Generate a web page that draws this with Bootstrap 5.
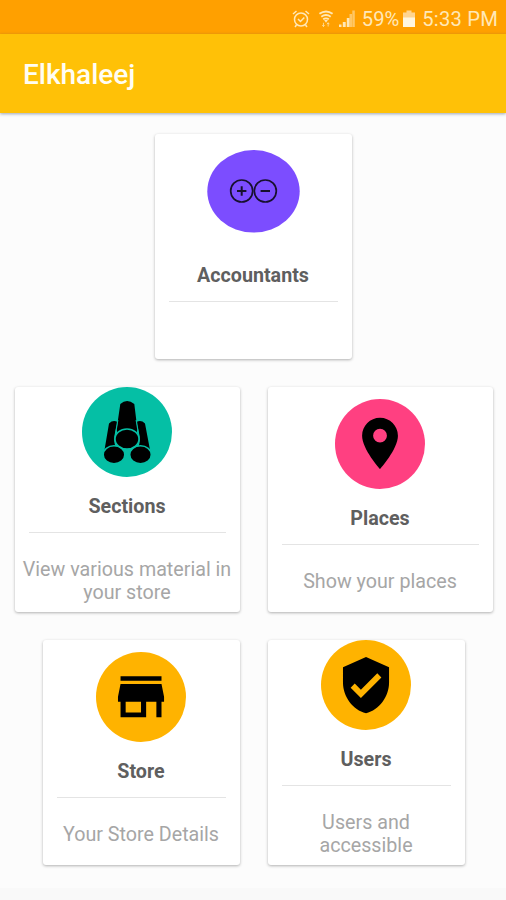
<!DOCTYPE html>
<html lang="en">
<head>
<meta charset="utf-8">
<meta name="viewport" content="width=device-width, initial-scale=1">
<title>Elkhaleej</title>
<link href="https://cdn.jsdelivr.net/npm/bootstrap@5.3.0/dist/css/bootstrap.min.css" rel="stylesheet">
<style>
body { font-family: Roboto, "Liberation Sans", sans-serif; background: #fcfcfc; height: 900px; overflow: hidden; }
.status-bar { height: 34px; background: #ffa000; color: #ffe8b8; font-size: 20.2px; line-height: 24px; padding: 3px 8px 0 0; }
.battery-level { margin-left: 6px; }
.battery-icon { margin-left: 4px; }
.clock-text { margin-left: 7px; letter-spacing: .2px; }
.app-bar { height: 78.5px; background: #ffc107; padding: 4px 0 0 23px; box-shadow: 0 1px 3px rgba(40, 60, 90, .45); }
.app-title { font-size: 28px; font-weight: 500; color: #fffdf3; line-height: 32px; }
.menu-grid { padding-top: 21.5px; gap: 28px; height: 775.5px; }
.menu-pair { gap: 28px; padding-left: 1px; }
.tile { height: 225px; border: 0; border-radius: 3px; box-shadow: 0 1px 3px rgba(0, 0, 0, .3); }
.tile-narrow { width: 197px; }
.tile-wide { width: 225px; }
.tile-drop { padding-top: 12px; }
.tile-first { padding-top: 16px; }
.tile-title { font-size: 19.7px; font-weight: 700; line-height: 24px; color: #5f5f5f; margin: 18px 0 0; }
.tile-first .tile-title { margin-top: 31px; }
.tile > .tile-rule { border-top: 1px solid #e4e4e4; opacity: 1; margin: 13px 14px 24.5px; align-self: stretch; }
.tile-text { font-size: 19.7px; line-height: 23.5px; color: #a6a6a6; margin: 0; padding: 0 6px; }
.tile-narrow .tile-text { padding: 0 28px; }
.tile-narrow.tile-drop .tile-text { padding: 0; }
.bottom-strip { background: #f9f9f9; }
</style>
</head>
<body class="d-flex flex-column">
<header class="status-bar d-flex justify-content-end align-items-center flex-shrink-0">
  <svg width="18" height="20" viewBox="0 0 18 20" fill="none" stroke="#ffe8b8" stroke-width="1.5"><circle cx="9" cy="10.5" r="6.5"/><path d="M6 10l2.500 2.500L12.300 8.500M1 5l3.500-3M17 5l-3.500-3M4.500 16l-1.500 2M13.500 16l1.500 2"/></svg>
  <svg class="ms-2" width="16" height="20" viewBox="0 0 17 20" fill="none" stroke="#ffe8b8" stroke-width="2"><path d="M1.500 4.500Q8.500-.5 15.500 4.500M3.500 7.500q5-3.500 10 0M5.500 10.300q3-2 6 0"/><path d="M6.500 11h4l-2 3z" fill="#ffe8b8" stroke="none"/><path d="M5.800 14v4M4.500 16.500l1.300 1.500 1.200-1.500M10.800 18v-4M9.500 15.500l1.300-1.500 1.200 1.500" stroke-width=".8"/></svg>
  <svg class="ms-1" width="18" height="20" viewBox="0 0 18 20" fill="#ffe8b8"><path d="M1 15.500h2.500V18H1zM4.800 13h2.900v5H4.800zM8.800 9h2.700v9H8.800z"/><path d="M11.500 5h2.500v13h-2.500zM14.300 1.500h2.500V18h-2.500z" opacity=".55"/></svg>
  <span class="battery-level">59%</span>
  <svg class="battery-icon" width="12" height="20" viewBox="0 0 12 20"><path d="M0 3.500h3.500V1.500h5v2H12V9H0z" fill="#ffd591"/><path d="M0 8.500h12V18H0z" fill="#fff6df"/></svg>
  <span class="clock-text">5:33 PM</span>
</header>
<nav class="app-bar d-flex align-items-center flex-shrink-0 position-relative"><span class="app-title">Elkhaleej</span></nav>

<main class="menu-grid d-flex flex-column flex-shrink-0">
  <div class="d-flex justify-content-center">
    <section class="card tile tile-narrow tile-first align-items-center text-center">
      <svg width="93" height="83" viewBox="0 0 93 83"><ellipse cx="46.500" cy="41.300" rx="46.200" ry="41.300" fill="#7c4dff"/><g fill="none" stroke="#17102e" stroke-width="1.700"><circle cx="34.700" cy="41" r="11"/><circle cx="58.300" cy="41" r="11"/><path d="M30 41h9.400M34.700 36.300v9.400M53.600 41H63" stroke-width="2"/></g></svg>
      <h2 class="tile-title">Accountants</h2>
      <hr class="tile-rule">
    </section>
  </div>

  <div class="menu-pair d-flex justify-content-center">
    <section class="card tile tile-wide align-items-center text-center">
      <svg width="90" height="90" viewBox="0 0 90 90"><circle cx="45" cy="45" r="45" fill="#05bfa5"/><path d="M38.300 17Q45 11 52.300 17L55.500 43Q54 45 56 48L34 48Q36 45 34.500 43z"/><path d="M27 36.500Q31 32.500 35.500 35L33 46Q31 52 33.500 60L22.500 63zM63 36.500Q59 32.500 54.500 35L57 46Q59 52 56.500 60L68 63z"/><path d="M35.800 33L33.500 47M54.200 33L56.500 47" stroke="#05bfa5" stroke-width="1.200"/><g stroke="#05bfa5" stroke-width="1.500"><ellipse cx="32" cy="67.700" rx="10.800" ry="9"/><ellipse cx="58.500" cy="67.700" rx="10.800" ry="9"/><ellipse cx="45" cy="52" rx="12" ry="10"/></g></svg>
      <h2 class="tile-title">Sections</h2>
      <hr class="tile-rule">
      <p class="tile-text">View various material in your store</p>
    </section>
    <section class="card tile tile-wide tile-drop align-items-center text-center">
      <svg width="90" height="90" viewBox="0 0 90 90"><circle cx="45" cy="45" r="45" fill="#ff4081"/><path transform="translate(14.300 13.600) scale(2.560)" d="M12 2C8.130 2 5 5.130 5 9c0 5.250 7 13 7 13s7-7.750 7-13c0-3.870-3.130-7-7-7zm0 9.700a2.700 2.700 0 1 1 0-5.400 2.700 2.700 0 0 1 0 5.400z"/></svg>
      <h2 class="tile-title">Places</h2>
      <hr class="tile-rule">
      <p class="tile-text">Show your places</p>
    </section>
  </div>

  <div class="menu-pair d-flex justify-content-center">
    <section class="card tile tile-narrow tile-drop align-items-center text-center">
      <svg width="90" height="90" viewBox="0 0 90 90"><circle cx="45" cy="45" r="45" fill="#ffb300"/><path transform="translate(14.300 14) scale(2.560)" d="M20 4H4v1.800h16V4zm1 10v-2l-1-5H4l-1 5v2h1v6h10v-6h4v6h2v-6h1zm-9 4.200H6V14h6v4.200z"/></svg>
      <h2 class="tile-title">Store</h2>
      <hr class="tile-rule">
      <p class="tile-text">Your Store Details</p>
    </section>
    <section class="card tile tile-narrow align-items-center text-center">
      <svg width="90" height="90" viewBox="0 0 90 90"><circle cx="45" cy="45" r="45" fill="#ffb300"/><path transform="translate(14.300 14.400) scale(2.560)" d="M12 1L3 5v6c0 5.550 3.840 10.740 9 12 5.160-1.260 9-6.450 9-12V5l-9-4zm-2 16l-4-4 1.600-1.600L10 13.800l6.400-6.400L18 9l-8 8z"/></svg>
      <h2 class="tile-title">Users</h2>
      <hr class="tile-rule">
      <p class="tile-text">Users and accessible</p>
    </section>
  </div>
</main>
<div class="bottom-strip flex-grow-1"></div>
<script src="https://cdn.jsdelivr.net/npm/bootstrap@5.3.0/dist/js/bootstrap.bundle.min.js"></script>
</body>
</html>
